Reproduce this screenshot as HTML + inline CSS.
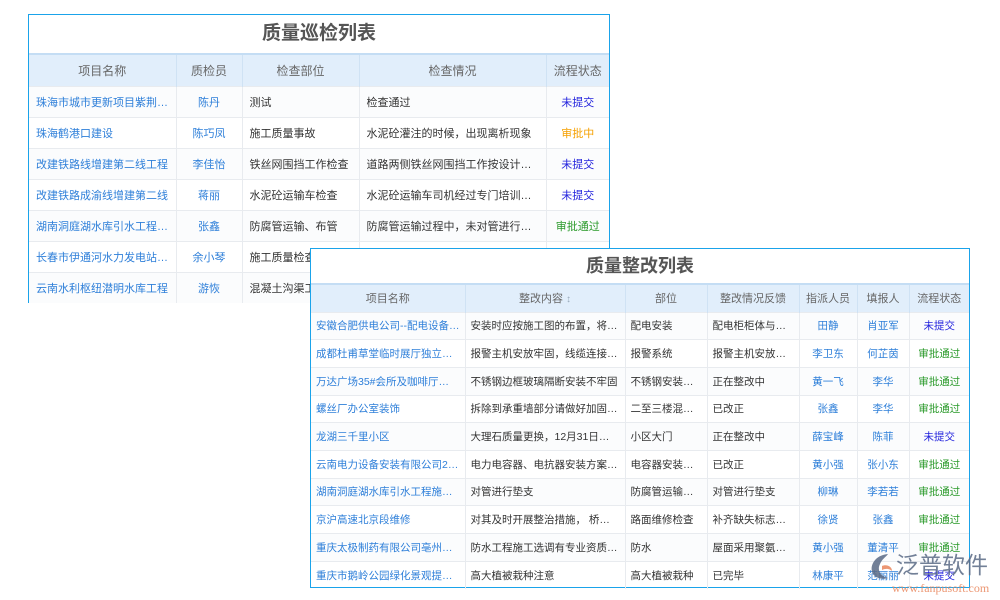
<!DOCTYPE html>
<html><head><meta charset="utf-8"><style>
*{margin:0;padding:0;box-sizing:border-box}
body{width:1000px;height:600px;background:#fff;position:relative;overflow:hidden;font-family:"Liberation Sans","Noto Sans CJK SC",sans-serif}
.t{position:absolute;background:#fff;border:1.5px solid #1aa3ea}
.ttl{text-align:center;font-weight:bold;color:#555;}
table{border-collapse:collapse;table-layout:fixed;width:100%}
th{background:#e1eefb;color:#666;font-weight:normal;border-right:1px solid #cfe2f4;border-top:2px solid #c4ddf4}
td{border-right:1px solid #e8ebef;border-top:1px solid #e8ebef;color:#333;white-space:nowrap;overflow:hidden;text-overflow:ellipsis}
tr:nth-child(even) td{background:#fbfcfd}
th:last-child,td:last-child{border-right:none}
.b{color:#2e7fd9}.c{text-align:center}
.n{color:#2222dd;text-align:center}.o{color:#f5a000;text-align:center}.g{color:#2a9a2a;text-align:center}
td.n,td.o,td.g{padding:0 2px!important;text-overflow:clip}
#t1{left:28px;top:14px;width:582px;height:289px}
#t1 .ttl{height:38px;line-height:38px;font-size:19px}
#t1 th{height:32px;font-size:12px}
#t1 td{height:31px;font-size:11px;padding:0 7px}
#t2{left:310px;top:248px;width:660px;height:340px}
#t2 .ttl{height:34px;line-height:34px;font-size:18px}
#t2 th{height:28px;font-size:11px}
#t2 td{height:27.7px;font-size:10.5px;padding:0 5px}
</style></head><body>
<div class="t" id="t1"><div class="ttl">质量巡检列表</div>
<table><colgroup><col style="width:147px"><col style="width:66px"><col style="width:117px"><col style="width:187px"><col></colgroup>
<tr><th>项目名称</th><th>质检员</th><th>检查部位</th><th>检查情况</th><th>流程状态</th></tr>
<tr><td class="b">珠海市城市更新项目紫荆花园</td><td class="b c">陈丹</td><td>测试</td><td>检查通过</td><td class="n">未提交</td></tr>
<tr><td class="b">珠海鹤港口建设</td><td class="b c">陈巧凤</td><td>施工质量事故</td><td>水泥砼灌注的时候，出现离析现象</td><td class="o">审批中</td></tr>
<tr><td class="b">改建铁路线增建第二线工程</td><td class="b c">李佳怡</td><td>铁丝网围挡工作检查</td><td>道路两侧铁丝网围挡工作按设计要求</td><td class="n">未提交</td></tr>
<tr><td class="b">改建铁路成渝线增建第二线</td><td class="b c">蒋丽</td><td>水泥砼运输车检查</td><td>水泥砼运输车司机经过专门培训上岗</td><td class="n">未提交</td></tr>
<tr><td class="b">湖南洞庭湖水库引水工程施工</td><td class="b c">张鑫</td><td>防腐管运输、布管</td><td>防腐管运输过程中，未对管进行垫支</td><td class="g">审批通过</td></tr>
<tr><td class="b">长春市伊通河水力发电站工程</td><td class="b c">余小琴</td><td>施工质量检查</td><td></td><td></td></tr>
<tr><td class="b">云南水利枢纽潜明水库工程</td><td class="b c">游恢</td><td>混凝土沟渠工程</td><td></td><td></td></tr>
</table></div>
<div class="t" id="t2"><div class="ttl">质量整改列表</div>
<table><colgroup><col style="width:154px"><col style="width:160px"><col style="width:82px"><col style="width:92px"><col style="width:58px"><col style="width:52px"><col></colgroup>
<tr><th>项目名称</th><th>整改内容 <span style="color:#9ab;font-size:10px">↕</span></th><th>部位</th><th>整改情况反馈</th><th>指派人员</th><th>填报人</th><th>流程状态</th></tr>
<tr><td class="b">安徽合肥供电公司--配电设备安装</td><td>安装时应按施工图的布置，将配电柜</td><td>配电安装</td><td>配电柜柜体与基础</td><td class="b c">田静</td><td class="b c">肖亚军</td><td class="n">未提交</td></tr>
<tr><td class="b">成都杜甫草堂临时展厅独立展柜</td><td>报警主机安放牢固，线缆连接可靠</td><td>报警系统</td><td>报警主机安放牢固</td><td class="b c">李卫东</td><td class="b c">何芷茵</td><td class="g">审批通过</td></tr>
<tr><td class="b">万达广场35#会所及咖啡厅空调工程</td><td>不锈钢边框玻璃隔断安装不牢固</td><td>不锈钢安装工程</td><td>正在整改中</td><td class="b c">黄一飞</td><td class="b c">李华</td><td class="g">审批通过</td></tr>
<tr><td class="b">螺丝厂办公室装饰</td><td>拆除到承重墙部分请做好加固措施</td><td>二至三楼混凝土</td><td>已改正</td><td class="b c">张鑫</td><td class="b c">李华</td><td class="g">审批通过</td></tr>
<tr><td class="b">龙湖三千里小区</td><td>大理石质量更换，12月31日之前完成</td><td>小区大门</td><td>正在整改中</td><td class="b c">薛宝峰</td><td class="b c">陈菲</td><td class="n">未提交</td></tr>
<tr><td class="b">云南电力设备安装有限公司2021年</td><td>电力电容器、电抗器安装方案，需要</td><td>电容器安装工程</td><td>已改正</td><td class="b c">黄小强</td><td class="b c">张小东</td><td class="g">审批通过</td></tr>
<tr><td class="b">湖南洞庭湖水库引水工程施工标</td><td>对管进行垫支</td><td>防腐管运输布管</td><td>对管进行垫支</td><td class="b c">柳琳</td><td class="b c">李若若</td><td class="g">审批通过</td></tr>
<tr><td class="b">京沪高速北京段维修</td><td>对其及时开展整治措施， 桥头跳车</td><td>路面维修检查</td><td>补齐缺失标志标牌</td><td class="b c">徐贤</td><td class="b c">张鑫</td><td class="g">审批通过</td></tr>
<tr><td class="b">重庆太极制药有限公司亳州中药材</td><td>防水工程施工选调有专业资质的队伍</td><td>防水</td><td>屋面采用聚氨酯防水</td><td class="b c">黄小强</td><td class="b c">董清平</td><td class="g">审批通过</td></tr>
<tr><td class="b">重庆市鹅岭公园绿化景观提升工程</td><td>高大植被栽种注意</td><td>高大植被栽种</td><td>已完毕</td><td class="b c">林康平</td><td class="b c">范丽丽</td><td class="n">未提交</td></tr>
</table></div>
<div style="position:absolute;left:868px;top:550px;width:132px;height:50px;opacity:.85;white-space:nowrap">
<svg width="28" height="30" viewBox="0 0 28 30" style="position:absolute;left:0;top:2px"><path d="M20 2 C8 3 2 12 4 20 C6 26 14 28 20 26 C12 24 9 18 12 12 C14 7 18 5 20 2Z" fill="#5a6a86"/><path d="M14 14 C18 12 24 14 24 19 C22 17 18 16 14 18Z" fill="#e9865c"/></svg>
<div style="position:absolute;left:28px;top:1px;font-size:23px;line-height:28px;color:#5a6a86">泛普软件</div>
<div style="position:absolute;left:24px;top:31px;font-family:'Liberation Serif',serif;font-size:12px;color:#e9865c">www.fanpusoft.com</div>
</div>
</body></html>
